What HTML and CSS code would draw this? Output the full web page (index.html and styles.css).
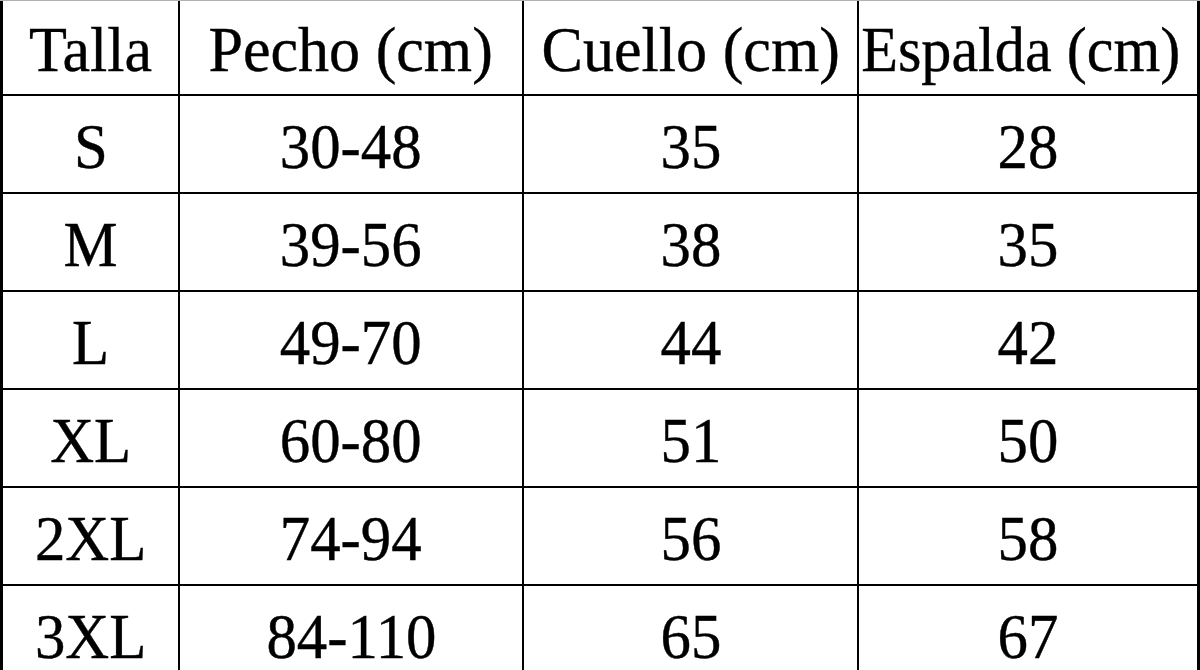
FILE: index.html
```html
<!DOCTYPE html>
<html lang="es">
<head>
<meta charset="utf-8">
<title>Tabla de tallas</title>
<link rel="stylesheet" href="styles.css">
</head>
<body>
<div class="sheet">
  <div class="grid">
    <div class="cell head"><span>Talla</span></div>
    <div class="cell head"><span>Pecho (cm)</span></div>
    <div class="cell head"><span>Cuello (cm)</span></div>
    <div class="cell head"><span class="tight">Espalda (cm)</span></div>

    <div class="cell"><span>S</span></div>
    <div class="cell"><span>30-48</span></div>
    <div class="cell"><span>35</span></div>
    <div class="cell"><span>28</span></div>

    <div class="cell"><span>M</span></div>
    <div class="cell"><span>39-56</span></div>
    <div class="cell"><span>38</span></div>
    <div class="cell"><span>35</span></div>

    <div class="cell"><span>L</span></div>
    <div class="cell"><span>49-70</span></div>
    <div class="cell"><span>44</span></div>
    <div class="cell"><span>42</span></div>

    <div class="cell"><span>XL</span></div>
    <div class="cell"><span>60-80</span></div>
    <div class="cell"><span>51</span></div>
    <div class="cell"><span>50</span></div>

    <div class="cell"><span>2XL</span></div>
    <div class="cell"><span>74-94</span></div>
    <div class="cell"><span>56</span></div>
    <div class="cell"><span>58</span></div>

    <div class="cell"><span>3XL</span></div>
    <div class="cell"><span>84-110</span></div>
    <div class="cell"><span>65</span></div>
    <div class="cell"><span>67</span></div>
  </div>
</div>
</body>
</html>
```

FILE: styles.css
```css
html, body {
  margin: 0;
  padding: 0;
  background: #ffffff;
  overflow: hidden;
}

.sheet {
  width: 1200px;
  height: 670px;
  overflow: hidden;
  border-top: 1px solid #b0b0b0;
  box-sizing: border-box;
}

.grid {
  display: grid;
  grid-template-columns: 175px 342px 333px 338px;
  grid-template-rows: 93px repeat(6, 96px);
  column-gap: 2px;
  row-gap: 2px;
  background: #000000;
  border-left: 3px solid #000000;
  border-right: 3px solid #000000;
  width: 1200px;
  box-sizing: border-box;
}

.cell {
  background: #ffffff;
  display: flex;
  align-items: center;
  justify-content: center;
  font-family: "Liberation Serif", "Times New Roman", serif;
  font-size: 64px;
  line-height: 1;
  color: #000000;
  -webkit-text-stroke: 0.4px #000000;
}

.cell span {
  display: inline-block;
  transform: scaleX(0.95);
  white-space: nowrap;
  padding-top: 5px;
}

.cell.head span {
  transform: scaleX(0.97);
  padding-top: 4px;
}

.cell.head span.tight {
  transform: scaleX(0.94);
  margin-right: 14px;
}
```
